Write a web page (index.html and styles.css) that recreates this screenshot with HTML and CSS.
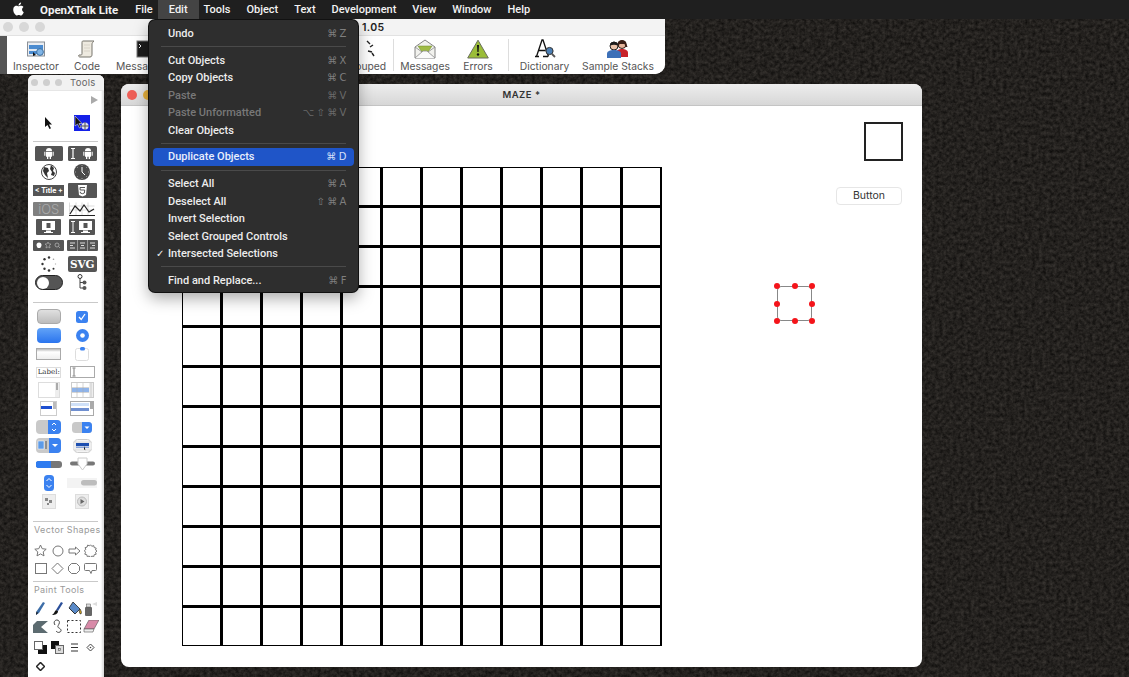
FILE: index.html

```html
<!DOCTYPE html>
<html lang="en">
<head>
  <meta charset="UTF-8" />
  <title>OpenXTalk Lite - MAZE</title>
  <link rel="stylesheet" href="styles.css">
</head>
<body>
  <svg class="wallpaper" width="1129" height="677" aria-hidden="true">
    <filter id="grain" color-interpolation-filters="sRGB" x="0" y="0" width="100%" height="100%">
      <feTurbulence type="fractalNoise" baseFrequency="0.28" numOctaves="4" seed="11"/>
      <feColorMatrix type="matrix" values="0.2 0 0 0 0.04  0.19 0 0 0 0.035  0.18 0 0 0 0.03  0 0 0 0 1"/>
    </filter>
    <rect width="1129" height="677" filter="url(#grain)"/>
  </svg>

  <nav class="menubar">
    <svg class="apple" viewBox="0 0 24 24" width="13" height="14"><path fill="#fff" d="M12.152 6.896c-.948 0-2.415-1.078-3.96-1.04-2.04.027-3.91 1.183-4.961 3.014-2.117 3.675-.546 9.103 1.519 12.09 1.013 1.454 2.208 3.09 3.792 3.039 1.52-.065 2.09-.987 3.935-.987 1.831 0 2.35.987 3.96.948 1.637-.026 2.676-1.48 3.676-2.948 1.156-1.688 1.636-3.325 1.662-3.415-.039-.013-3.182-1.221-3.22-4.857-.026-3.04 2.48-4.494 2.597-4.559-1.429-2.09-3.623-2.324-4.39-2.376-2-.156-3.675 1.09-4.61 1.09zM15.53 3.83c.843-1.012 1.4-2.427 1.245-3.83-1.207.052-2.662.805-3.532 1.818-.78.896-1.454 2.338-1.273 3.714 1.338.104 2.715-.688 3.559-1.701"/></svg>
    <span class="menu-title app-name">OpenXTalk Lite</span>
    <span class="menu-title">File</span>
    <span class="menu-title active">Edit</span>
    <span class="menu-title">Tools</span>
    <span class="menu-title">Object</span>
    <span class="menu-title">Text</span>
    <span class="menu-title">Development</span>
    <span class="menu-title">View</span>
    <span class="menu-title">Window</span>
    <span class="menu-title">Help</span>
  </nav>

  <!-- main toolbar window -->
  <section class="toolbar-win">
    <div class="toolbar-title">
      <i class="light"></i><i class="light"></i><i class="light"></i>
      <span class="version">1.05</span>
    </div>
    <div class="toolbar-body">
      <div class="tb-item tb-inspector">
        <svg width="20" height="20" viewBox="0 0 20 20">
          <rect x="1.5" y="3" width="17" height="14" fill="#e9edf2" stroke="#8a8f96"/>
          <rect x="3" y="6" width="14" height="9" fill="#4a8bd0"/>
          <rect x="3" y="10" width="14" height="2" fill="#dfe8f2"/>
          <circle cx="14" cy="13" r="3.4" fill="#7fb4e6" stroke="#3d6f9f"/>
          <path d="M7 13l3 3-3 1z" fill="#111"/>
        </svg>
        <span>Inspector</span>
      </div>
      <div class="tb-item tb-code">
        <svg width="20" height="20" viewBox="0 0 20 20">
          <path d="M6 2h11c-1 1-2 2-2 3v10c0 1 0 3-2 3H3c-1 0-2-1-1-2h2c1 0 1-1 1-2V4c0-1 0-2 1-2z" fill="#eeeae0" stroke="#77746c"/>
          <path d="M7 6h6M7 9h6M7 12h6" stroke="#cfcabd" stroke-width=".7"/>
        </svg>
        <span>Code</span>
      </div>
      <div class="tb-item tb-message">
        <svg width="20" height="20" viewBox="0 0 20 20">
          <rect x="1" y="2" width="18" height="16" fill="#1c1c1c" stroke="#777"/>
          <path d="M3 5l2 2-2 2" stroke="#eee" fill="none"/>
        </svg>
        <span>Message Box</span>
      </div>
      <div class="tb-item tb-grouped">
        <svg width="26" height="20" viewBox="0 0 26 20">
          <path d="M15 2l3 3M18 8l3-2M16 12l4 1M20 14l2 3" stroke="#222" stroke-width="1.4"/>
        </svg>
        <span>Grouped</span>
      </div>
      <i class="tb-sep"></i>
      <div class="tb-item tb-messages">
        <svg width="22" height="20" viewBox="0 0 22 20">
          <path d="M1 8L11 1l10 7v11H1z" fill="#f2f2ee" stroke="#777" stroke-width=".9"/>
          <path d="M4 7h14l-4 6H8z" fill="#9fbb45" stroke="#6d8a2a" stroke-width=".5"/>
          <path d="M1 19l8-7h4l8 7M1 8l7 5M21 8l-7 5" fill="#fafafa" stroke="#8a8a8a" stroke-width=".8"/>
        </svg>
        <span>Messages</span>
      </div>
      <div class="tb-item tb-errors">
        <svg width="22" height="20" viewBox="0 0 22 20">
          <path d="M11 1.2L21.3 19H.7z" fill="#9bbd38" stroke="#6b6f5c" stroke-linejoin="round"/>
          <path d="M10 6h2l-.4 7h-1.2z" fill="#111"/>
          <circle cx="11" cy="15.5" r="1.2" fill="#111"/>
        </svg>
        <span>Errors</span>
      </div>
      <i class="tb-sep"></i>
      <div class="tb-item tb-dictionary">
        <svg width="24" height="20" viewBox="0 0 24 20">
          <path d="M2 17.5h4M10 17.5h5M3.5 17.5L9 1h1l5.500 16.500M5.500 11.500h7" fill="none" stroke="#111" stroke-width="1.3"/>
          <circle cx="16.500" cy="12" r="3.600" fill="#4c7fb4" stroke="#333"/>
          <path d="M19 15l3 3" stroke="#555" stroke-width="1.800"/>
        </svg>
        <span>Dictionary</span>
      </div>
      <div class="tb-item tb-stacks">
        <svg width="24" height="20" viewBox="0 0 24 20">
          <circle cx="16" cy="5.500" r="4" fill="#e5b49a" stroke="#33211a"/>
          <path d="M11.500 5c0-5 9-5 9 0l1 3h-2l-1-3h-5l-1 3h-2z" fill="#3a1f16"/>
          <path d="M10 18v-4c0-3 3-4 6-4s6 1 6 4v4z" fill="#c8232a"/>
          <circle cx="8" cy="7" r="4" fill="#eac2a8" stroke="#222"/>
          <path d="M4 6.500c0-5 8-5 8 0-3-1-5-1-8 0z" fill="#1d1d1d"/>
          <path d="M1 19v-4c0-3 3-4 7-4s7 1 7 4v4z" fill="#3d70b8"/>
        </svg>
        <span>Sample Stacks</span>
      </div>
    </div>
  </section>

  <!-- tools palette -->
  <aside class="palette">
    <div class="palette-title">
      <i class="dot"></i><i class="dot"></i><i class="dot"></i>
      <span>Tools</span>
    </div>
    <div class="palette-play"></div>
    <div class="tool-grid pointer-row">
      <svg width="12" height="14" viewBox="0 0 12 14"><path d="M2 1v10l2.500-2 2 4 1.500-.8-2-3.700H9z" fill="#111"/></svg>
      <svg class="picked" width="16" height="16" viewBox="0 0 16 16">
        <rect width="16" height="16" fill="#1420e8"/>
        <path d="M1 1v10l2.500-2 2 4 1.500-.8-2-3.700H8z" fill="#111" stroke="#fff" stroke-width=".5"/>
        <circle cx="11" cy="11" r="3.500" fill="#dfe0f0"/>
        <path d="M11 7v8M7 11h8" stroke="#555"/>
      </svg>
    </div>
    <hr class="rule">
    <div class="tool-grid">
      <svg width="28" height="15" viewBox="0 0 28 15"><rect width="28" height="15" rx="1.500" fill="#555"/><use href="#droid" x="9"/></svg>
      <svg width="29" height="15" viewBox="0 0 29 15"><rect width="29" height="15" rx="1.500" fill="#555"/><path d="M5 3v9M3 2.500h4M3 12.500h4" stroke="#fff" stroke-width="1.200"/><use href="#droid" x="15"/></svg>

      <svg width="16" height="16" viewBox="0 0 16 16"><circle cx="8" cy="8" r="7.500" fill="#fff" stroke="#444"/><path d="M3 3l4 1 1 3-2 2 1 5-3-3-2-4zM10 1l3 3-1 3 2 2-1 3-3-1 1-3-2-3z" fill="#333"/></svg>
      <svg width="16" height="16" viewBox="0 0 16 16"><circle cx="8" cy="8" r="8" fill="#4b4b4b"/><path d="M8 3v5l3 3" fill="none" stroke="#fff"/><path d="M8 1v1M8 14v1M1 8h1M14 8h1M3 3l.7.7M12.300 12.300l.7.7M13 3l-.7.7M3.700 12.300L3 13" stroke="#ccc" stroke-width=".7"/></svg>

      <div class="chip title-chip">&lt; Title +</div>
      <svg width="29" height="15" viewBox="0 0 29 15"><rect width="29" height="15" rx="1" fill="#555"/><path d="M10 2h9l-1 10-3.500 1.500L11 12z" fill="#fff"/><path d="M17 4.500h-5l.2 2.500h4.500l-.3 3-2 .7-2-.7-.1-1.200" fill="none" stroke="#555"/></svg>

      <div class="chip ios-chip">iOS</div>
      <svg width="26" height="14" viewBox="0 0 26 14"><path d="M.5 .5v13h25M.5 4h25M.5 8h25M7 .5v13M13 .5v13M19 .5v13" stroke="#bbb" stroke-width=".5" fill="none"/><path d="M1 12l5-8 5 5 4-6 5 7 5-3" fill="none" stroke="#222" stroke-width="1.200"/><path d="M0 13.500h26" stroke="#222"/></svg>

      <svg width="25" height="16" viewBox="0 0 25 16"><rect width="25" height="16" rx="1" fill="#555"/><use href="#screen" x="5"/></svg>
      <svg width="26" height="16" viewBox="0 0 26 16"><rect width="26" height="16" rx="1" fill="#555"/><path d="M4 3v10M2 2.500h4M2 13.500h4" stroke="#fff"/><use href="#screen" x="9"/></svg>

      <svg width="31" height="11" viewBox="0 0 31 11"><rect width="31" height="11" rx="1" fill="#555"/><circle cx="6" cy="5" r="2.500" fill="#fff"/><rect x="4.500" y="5" width="3" height="3" fill="#fff"/><path d="M15 2l1 2h2l-1.500 1.500.5 2.500-2-1.200-2 1.200.5-2.500L12 4h2z" fill="none" stroke="#bbb" stroke-width=".6"/><circle cx="24" cy="5" r="2" fill="none" stroke="#bbb" stroke-width=".7"/><path d="M25.500 6.500L27 8" stroke="#bbb" stroke-width=".7"/></svg>
      <svg width="31" height="11" viewBox="0 0 31 11"><rect width="31" height="11" rx="1" fill="#555"/><path d="M10.500 0v11M20.500 0v11" stroke="#ddd" stroke-width=".5"/><path d="M3 3h5M3 5.500h3M3 8h5M13 3h5M14 5.500h3M13 8h5M23 3h5M25 5.500h3M23 8h5" stroke="#eee" stroke-width=".9"/></svg>

      <svg width="16" height="16" viewBox="0 0 16 16"><g fill="#333"><circle cx="8" cy="1.500" r="1.200"/><circle cx="12.500" cy="3.300" r=".8" fill="#999"/><circle cx="14.500" cy="8" r=".7" fill="#bbb"/><circle cx="12.500" cy="12.700" r="1"/><circle cx="8" cy="14.500" r="1.300"/><circle cx="3.500" cy="12.700" r="1.200"/><circle cx="1.500" cy="8" r="1.200"/><circle cx="3.500" cy="3.300" r="1.200"/></g></svg>
      <div class="chip svg-chip">SVG</div>

      <div class="toggle"><i></i></div>
      <svg width="10" height="17" viewBox="0 0 10 17"><path d="M3 3v11h4M3 8.500h4" fill="none" stroke="#444"/><circle cx="3" cy="2.500" r="2" fill="#fff" stroke="#333"/><circle cx="7.500" cy="8.500" r="2" fill="#555"/><circle cx="7.500" cy="14" r="2" fill="#555"/></svg>
    </div>
    <hr class="rule rule-b">
    <div class="tool-grid">
      <div class="btn-grey"></div>
      <svg width="12" height="12" viewBox="0 0 12 12"><rect width="12" height="12" rx="2.500" fill="#3b82f0"/><path d="M3 6l2.200 2.500L9 3" fill="none" stroke="#fff" stroke-width="1.300"/></svg>

      <div class="btn-blue"></div>
      <svg width="13" height="13" viewBox="0 0 13 13"><circle cx="6.500" cy="6.500" r="6.500" fill="#3b82f0"/><circle cx="6.500" cy="6.500" r="2.300" fill="#fff"/></svg>

      <div class="field-box"></div>
      <svg width="14" height="14" viewBox="0 0 14 14"><rect x=".5" y="1.500" width="13" height="12" rx="2" fill="#fff" stroke="#ddd"/><rect x="5" y="0" width="5" height="3.500" rx="1.500" fill="#3b82f0"/></svg>

      <div class="label-box">Label:</div>
      <svg width="25" height="12" viewBox="0 0 25 12"><rect x=".5" y=".5" width="24" height="11" fill="#fff" stroke="#aaa"/><path d="M4 2.500v7M2.500 2h3M2.500 10h3" stroke="#444" stroke-width=".7"/></svg>

      <svg width="22" height="16" viewBox="0 0 22 16"><rect x=".5" y=".5" width="21" height="15" fill="#fff" stroke="#ddd"/><rect x="17" y="1" width="4" height="14" fill="#eee"/><rect x="18" y="1" width="2" height="7" fill="#aaa"/></svg>
      <svg width="23" height="16" viewBox="0 0 23 16"><rect x=".5" y=".5" width="22" height="15" fill="#fff" stroke="#ccc"/><rect x="1" y="6" width="17" height="4" fill="#8fb4ea"/><path d="M6 1v14M12 1v14M1 5.500h17M1 10.500h17" stroke="#aaa" stroke-width=".5"/><rect x="18.500" y="1" width="3" height="14" fill="#ddd"/></svg>

      <svg width="17" height="15" viewBox="0 0 17 15"><rect x=".5" y=".5" width="16" height="14" fill="#fff" stroke="#ccc"/><rect x="1" y="5" width="11" height="3" fill="#1e4fd0"/><rect x="13" y="1" width="3" height="7" fill="#bbb"/></svg>
      <svg width="24" height="15" viewBox="0 0 24 15"><rect x=".5" y=".5" width="23" height="14" fill="#fff" stroke="#aaa"/><rect x="1" y="2" width="18" height="3" fill="#cfe0f8"/><rect x="1" y="7" width="18" height="3" fill="#6f8fd0"/><rect x="20" y="1" width="3" height="7" fill="#aaa"/></svg>

      <svg width="25" height="14" viewBox="0 0 25 14"><rect width="25" height="14" rx="4" fill="#c9c9c9"/><path d="M12 0h9a4 4 0 014 4v6a4 4 0 01-4 4h-9z" fill="#3b82f0"/><path d="M16 5l2-2 2 2M16 9l2 2 2-2" fill="none" stroke="#fff"/></svg>
      <svg width="20" height="11" viewBox="0 0 20 11"><rect width="20" height="11" rx="3.500" fill="#c9c9c9"/><path d="M10 0h6.500a3.500 3.500 0 013.500 3.500v4a3.500 3.500 0 01-3.500 3.500H10z" fill="#3b82f0"/><path d="M12.500 4.500h5l-2.500 2.500z" fill="#fff"/></svg>

      <svg width="25" height="15" viewBox="0 0 25 15"><rect width="25" height="15" rx="4" fill="#c9c9c9"/><path d="M13 0h8a4 4 0 014 4v7a4 4 0 01-4 4h-8z" fill="#3b82f0"/><path d="M16 6h6l-3 3z" fill="#fff"/><rect x="2" y="3" width="6" height="8" fill="#5d9be8" stroke="#fff" stroke-width=".5"/><path d="M10 3v8" stroke="#555"/></svg>
      <svg width="19" height="14" viewBox="0 0 19 14"><rect x="1.500" y=".5" width="16" height="13" rx="3" fill="#f4f4f4" stroke="#ccc"/><rect x="0" y="3" width="19" height="8" fill="#eee" stroke="#ccc" stroke-width=".5"/><rect x="3" y="4" width="13" height="3" fill="#1e4fb0"/><rect x="3" y="7.500" width="13" height="1.500" fill="#8aa4d8"/><path d="M11 7v4l1-.8.800 1.500" fill="#111"/></svg>

      <svg width="26" height="7" viewBox="0 0 26 7"><rect width="26" height="7" rx="3" fill="#777"/><path d="M3 0h12v7H3a3 3 0 010-7z" fill="#2f7cf0"/></svg>
      <svg width="25" height="14" viewBox="0 0 25 14"><rect y="4.500" width="25" height="4" rx="2" fill="#777"/><path d="M8 1h9v6l-4.500 6L8 7z" fill="#fff" stroke="#ccc"/></svg>

      <svg width="10" height="16" viewBox="0 0 10 16"><rect width="10" height="16" rx="3.500" fill="#3b82f0"/><path d="M2.500 6L5 3.500 7.500 6M2.500 10L5 12.500 7.500 10" fill="none" stroke="#fff"/></svg>
      <svg width="30" height="10" viewBox="0 0 30 10"><rect width="30" height="10" fill="#f3f3f3"/><rect x="14" y="2" width="16" height="5.500" rx="2.700" fill="#bdbdbd"/></svg>

      <svg width="14" height="15" viewBox="0 0 14 15"><rect x=".5" y=".5" width="13" height="14" fill="#eee" stroke="#ddd"/><path d="M3 4h3v3H3zM7 6h3v3H7zM5 9h2v2H5z" fill="#888"/></svg>
      <svg width="14" height="15" viewBox="0 0 14 15"><rect x=".5" y=".5" width="13" height="14" fill="#eee" stroke="#ddd"/><circle cx="7" cy="7.500" r="4.500" fill="#ddd" stroke="#bbb"/><path d="M5.500 5l4 2.500-4 2.500z" fill="#666"/></svg>
    </div>

    <hr class="rule rule-c">
    <p class="palette-head">Vector Shapes</p>
    <div class="tool-grid four shapes">
      <svg width="13" height="13" viewBox="0 0 13 13"><path d="M6.500 1l1.700 3.700 4 .5-3 2.700.8 4-3.500-2-3.500 2 .8-4-3-2.700 4-.5z"/></svg>
      <svg width="12" height="12" viewBox="0 0 12 12"><circle cx="6" cy="6" r="5"/></svg>
      <svg width="13" height="10" viewBox="0 0 13 10"><path d="M1 3h6.500V1L12 5 7.500 9V7H1z"/></svg>
      <svg width="13" height="13" viewBox="0 0 13 13"><path d="M6.500 .8l1.300 1.500 1.900-.7.500 2 2 .5-.7 1.900 1.500 1-1.500 1.300.7 1.900-2 .5-.5 2-1.900-.7-1.300 1.500-1.300-1.500-1.900.7-.5-2-2-.5.7-1.900L.3 6.500l1.500-1-.7-1.900 2-.5.500-2 1.900.7z"/></svg>

      <svg width="12" height="11" viewBox="0 0 12 11"><rect x=".5" y=".5" width="11" height="10"/></svg>
      <svg width="13" height="13" viewBox="0 0 13 13"><path d="M6.500 1l5.500 5.500-5.500 5.500L1 6.500z"/></svg>
      <svg width="12" height="11" viewBox="0 0 12 11"><path d="M3.500 .5h5l3 3v4l-3 3h-5l-3-3v-4z"/></svg>
      <svg width="13" height="11" viewBox="0 0 13 11"><path d="M1.500 .5h10a1 1 0 011 1v5a1 1 0 01-1 1H8l-1 3-1.500-3h-4a1 1 0 01-1-1v-5a1 1 0 011-1z"/></svg>
    </div>

    <hr class="rule rule-d">
    <p class="palette-head">Paint Tools</p>
    <div class="tool-grid four paint">
      <svg width="11" height="15" viewBox="0 0 11 15"><path d="M8 1l2 1-6 10-3 2 .5-3.500z" fill="#3d6ea8"/><path d="M1 14l.5-3.500L3 12z" fill="#111"/></svg>
      <svg width="12" height="15" viewBox="0 0 12 15"><path d="M9 1l2 1-5 8-2-1z" fill="#2a4f9a"/><path d="M4 9l2 1c0 3-3 4-6 4 2-1 2-3 4-5z" fill="#111"/></svg>
      <svg width="15" height="15" viewBox="0 0 15 15"><path d="M6 1l7 7-5 5-6-6z" fill="#5a8ac8" stroke="#222" stroke-width=".8"/><path d="M13 8c1 2 2 3 1 5-2 0-2-3-1-5zM2 7l6 6" fill="#d0a020" stroke="#222" stroke-width=".6"/></svg>
      <svg width="13" height="15" viewBox="0 0 13 15"><rect x="1" y="6" width="7" height="9" rx="1" fill="#666"/><rect x="2.500" y="3" width="4" height="3" fill="#ddd" stroke="#555" stroke-width=".5"/><path d="M8 3l5-2v4z" fill="#ddd"/></svg>

      <svg width="15" height="12" viewBox="0 0 15 12"><path d="M4 0h11L8 6l7 6H0V4z" fill="#5c6b70"/></svg>
      <svg width="11" height="15" viewBox="0 0 11 15"><path d="M3 6C1 3 3 1 5 1s3 2 2 4-2 3 0 4 3 3 1 4-3 0-4-1" fill="none" stroke="#444"/></svg>
      <svg width="14" height="13" viewBox="0 0 14 13"><rect x=".5" y=".5" width="13" height="12" fill="none" stroke="#333" stroke-dasharray="2 2"/></svg>
      <svg width="16" height="13" viewBox="0 0 16 13"><path d="M6 0h10l-5 9H1z" fill="#d88aa8" stroke="#555" stroke-width=".6"/><path d="M1 9h10l-1 3H1z" fill="#eee" stroke="#555" stroke-width=".6"/></svg>

      <svg class="low" width="13" height="13" viewBox="0 0 13 13"><rect x="4" y="4" width="9" height="9" fill="#111"/><rect x=".5" y=".5" width="8" height="8" fill="#fff" stroke="#666"/></svg>
      <svg class="low" width="13" height="13" viewBox="0 0 13 13"><rect width="8" height="8" fill="#111"/><rect x="4.500" y="4.500" width="8" height="8" fill="#ddd" stroke="#666"/><rect x="7.500" y="7.500" width="2" height="2" fill="none" stroke="#555" stroke-width=".6"/></svg>
      <svg class="low" width="9" height="9" viewBox="0 0 9 9"><path d="M1 1h7M1 4.500h7M1 8h7" stroke="#333" stroke-width="1.100"/></svg>
      <svg class="low" width="9" height="9" viewBox="0 0 9 9"><path d="M4.500 1L8 4.500 4.500 8 1 4.500z" fill="#fff" stroke="#444"/><circle cx="4.500" cy="4.500" r=".8" fill="#444"/></svg>

      <svg class="last" width="9" height="9" viewBox="0 0 9 9"><path d="M4.500 .5L8.500 4.500 4.500 8.500 .5 4.500z" fill="#fff" stroke="#222" stroke-width="1.500"/></svg>
    </div>
  </aside>

  <!-- the stack being edited -->
  <main class="stack-win">
    <div class="stack-title">
      <i class="light red"></i><i class="light yellow"></i>
      <span>MAZE *</span>
    </div>
    <div class="stack-card">
      <div class="maze" id="maze"></div>
      <div class="square"></div>
      <div class="card-button">Button</div>
      <div class="picked-shape">
        <i class="h h1"></i><i class="h h2"></i><i class="h h3"></i><i class="h h4"></i>
        <i class="h h5"></i><i class="h h6"></i><i class="h h7"></i><i class="h h8"></i>
      </div>
    </div>
  </main>

  <!-- open Edit menu -->
  <div class="menu">
    <div class="menu-item"><span>Undo</span><kbd>⌘ Z</kbd></div>
    <hr>
    <div class="menu-item"><span>Cut Objects</span><kbd>⌘ X</kbd></div>
    <div class="menu-item"><span>Copy Objects</span><kbd>⌘ C</kbd></div>
    <div class="menu-item off"><span>Paste</span><kbd>⌘ V</kbd></div>
    <div class="menu-item off"><span>Paste Unformatted</span><kbd>⌥ ⇧ ⌘ V</kbd></div>
    <div class="menu-item"><span>Clear Objects</span></div>
    <hr>
    <div class="menu-item current"><span>Duplicate Objects</span><kbd>⌘ D</kbd></div>
    <hr>
    <div class="menu-item"><span>Select All</span><kbd>⌘ A</kbd></div>
    <div class="menu-item"><span>Deselect All</span><kbd>⇧ ⌘ A</kbd></div>
    <div class="menu-item"><span>Invert Selection</span></div>
    <div class="menu-item"><span>Select Grouped Controls</span></div>
    <div class="menu-item checked"><span>Intersected Selections</span></div>
    <hr>
    <div class="menu-item"><span>Find and Replace...</span><kbd>⌘ F</kbd></div>
  </div>

  <svg width="0" height="0" class="defs" aria-hidden="true">
    <symbol id="droid" width="10" height="15" viewBox="0 0 10 15">
      <path d="M2 5a3 3 0 016 0zM2 5.700h6v5H2zM.3 5.700h1.100v4H.3zM8.600 5.700h1.100v4H8.600zM3 10h1.300v3H3zM5.700 10H7v3H5.700z" fill="#fff"/>
    </symbol>
    <symbol id="screen" width="15" height="16" viewBox="0 0 15 16">
      <rect x="1" y="2" width="13" height="9" fill="#fff"/>
      <rect x="5.500" y="4" width="4" height="5" fill="#555"/>
      <path d="M5 11.500h5v1.500h2v1H3v-1h2z" fill="#fff"/>
    </symbol>
  </svg>

  <script src="script.js"></script>
</body>
</html>
```

FILE: styles.css

```css
* {
  box-sizing: border-box;
}
html, body {
  margin: 0;
  height: 677px;
  overflow: hidden;
}
body {
  position: relative;
  width: 1129px;
  background: #25231f;
  font-family: Inter, "Liberation Sans", sans-serif;
  color: #222;
}
.wallpaper {
  position: absolute;
  left: 0;
  top: 0;
}
.defs {
  position: absolute;
}
.menubar {
  position: relative;
  z-index: 5;
  display: flex;
  align-items: center;
  gap: 16px;
  height: 19px;
  padding-left: 40px;
  background: #1f1f1f;
  font-family: Roboto, "Liberation Sans", sans-serif;
}
.apple {
  position: absolute;
  left: 12px;
  top: 2px;
}
.menu-title {
  position: relative;
  color: #f2f2f2;
  font-size: 11px;
  font-weight: 500;
}
.app-name {
  margin-right: 1px;
  font-size: 11.5px;
  font-weight: 700;
}
.menu-title.active {
  background: #444;
  margin: 0 -11px;
  padding: 0 11px;
  line-height: 19px;
}
.light {
  display: block;
  width: 10px;
  height: 10px;
  border-radius: 50%;
  background: #d8d8d8;
}

/* toolbar window */
.toolbar-win {
  position: absolute;
  left: 0;
  top: 19px;
  width: 665px;
  height: 55px;
  border-radius: 0 0 10px 0;
  overflow: hidden;
  background: #fff;
}
.toolbar-title {
  display: flex;
  align-items: center;
  gap: 6px;
  height: 17px;
  padding-left: 3px;
  background: #f3f3f3;
  border-bottom: 1px solid #e2e2e2;
}
.version {
  margin-left: 311px;
  font-size: 10.5px;
  font-weight: 600;
  letter-spacing: .4px;
  color: #222;
}
.toolbar-body {
  display: flex;
  height: 38px;
  border-left: 7px solid #555;
  background: #fff;
}
.tb-item {
  display: flex;
  flex-direction: column;
  align-items: center;
  padding-top: 3px;
  flex: none;
}
.tb-item span {
  margin-top: 1px;
  font-size: 10.3px;
  line-height: 12px;
  color: #555;
  white-space: nowrap;
}
.tb-inspector { width: 58px; }
.tb-code { width: 44px; }
.tb-message { width: 74px; }
.tb-grouped { width: 44px; margin-left: 160px; }
.tb-messages { width: 62px; }
.tb-errors { width: 44px; }
.tb-dictionary { width: 71px; }
.tb-stacks { width: 76px; }
/* the open menu covers the rest of this label */
.tb-message span {
  align-self: flex-start;
  width: 32px;
  margin-left: 7px;
  overflow: hidden;
}
.tb-sep {
  flex: none;
  width: 1px;
  height: 32px;
  margin: 3px 6px 0;
  background: #ddd;
}
.tb-grouped + .tb-sep {
  margin: 3px 0 0 6px;
}
.tb-errors + .tb-sep {
  margin: 3px 0 0 8px;
}

/* tools palette */
.palette {
  position: absolute;
  left: 28px;
  top: 75px;
  width: 76px;
  height: 620px;
  border-radius: 6px 6px 0 0;
  overflow: hidden;
  background: #fff;
  box-shadow: inset -2px 0 2px #ddd;
}
.palette-title {
  display: flex;
  align-items: center;
  gap: 5px;
  height: 16px;
  padding-left: 3px;
  background: #f2f2f2;
  border-bottom: 1px solid #e6e6e6;
}
.palette-title span {
  margin-left: 3px;
  font-size: 9.5px;
  color: #666;
  letter-spacing: .3px;
}
.dot {
  display: block;
  width: 7px;
  height: 7px;
  border-radius: 50%;
  background: #cfcfcf;
}
.palette-play {
  width: 0;
  height: 0;
  margin: 5px 0 0 63px;
  border-left: 7px solid #aaa;
  border-top: 4.5px solid transparent;
  border-bottom: 4.5px solid transparent;
}
.tool-grid {
  display: grid;
  grid-template-columns: 33.5px 33.5px;
  grid-auto-rows: 18.45px;
  justify-items: center;
  align-items: center;
  margin-left: 4px;
}
.tool-grid svg {
  display: block;
}
.pointer-row {
  margin-top: 11px;
  grid-auto-rows: 16px;
}
.rule {
  height: 1px;
  margin: 10px 6px 2.5px 5px;
  border: 0;
  background: #c9c9c9;
}
.rule-b {
  margin-top: 10px;
  margin-bottom: 4.5px;
}
.rule-c {
  margin-top: 11px;
  margin-bottom: 0;
}
.rule-d {
  margin-top: 3px;
  margin-bottom: 0;
}
.palette-head {
  margin: 2px 0 5px 6px;
  font-size: 9px;
  line-height: 12px;
  letter-spacing: .35px;
  color: #999;
}
.four {
  grid-template-columns: repeat(4, 16.7px);
  margin-left: 4.5px;
}
.paint {
  margin-top: -2px;
}
.shapes svg {
  fill: #fff;
  stroke: #777;
}
.low {
  position: relative;
  top: 2px;
}
.last {
  grid-column: 1;
  position: relative;
  top: 3px;
}
.chip {
  display: flex;
  align-items: center;
  justify-content: center;
  background: #555;
  color: #fff;
}
.title-chip {
  width: 31px;
  height: 11px;
  font-size: 7px;
  font-weight: 700;
  white-space: nowrap;
}
.ios-chip {
  width: 31px;
  height: 14px;
  border-radius: 1px;
  background: #808080;
  color: #aaa;
  font-size: 13px;
  font-weight: 300;
}
.svg-chip {
  width: 29px;
  height: 16px;
  border-radius: 2px;
  font-family: "DejaVu Serif", serif;
  font-size: 10.5px;
  font-weight: 700;
}
.toggle {
  display: flex;
  align-items: center;
  width: 28px;
  height: 15px;
  padding-left: 1px;
  border: 1.5px solid #222;
  border-radius: 8px;
  background: #555;
}
.toggle i {
  display: block;
  width: 12px;
  height: 12px;
  border-radius: 50%;
  background: #fff;
}
.btn-grey, .btn-blue {
  width: 24px;
  height: 15px;
  border-radius: 4px;
}
.btn-grey {
  border: 1px solid #aaa;
  background: linear-gradient(#e0e0e0, #bcbcbc);
}
.btn-blue {
  background: linear-gradient(#62a3f7, #2a74ee);
}
.field-box {
  width: 25px;
  height: 12px;
  border: 1px solid #aaa;
  background: linear-gradient(#bbb, #fff 30%, #eee);
}
.label-box {
  width: 25px;
  height: 11px;
  border: 1px solid #ddd;
  font-family: "DejaVu Serif", serif;
  font-size: 7px;
  line-height: 9px;
  text-align: center;
  color: #333;
}

/* stack window */
.stack-win {
  position: absolute;
  left: 121px;
  top: 84px;
  width: 801px;
  height: 583px;
  border-radius: 8px;
  overflow: hidden;
  background: #fff;
  display: flex;
  flex-direction: column;
}
.stack-title {
  position: relative;
  display: flex;
  align-items: center;
  justify-content: center;
  flex: none;
  height: 22px;
  background: linear-gradient(#ededed, #d7d7d7);
  border-bottom: 1px solid #c4c4c4;
}
.stack-title span {
  font-size: 9.5px;
  font-weight: 600;
  letter-spacing: .5px;
  color: #333;
}
.red, .yellow {
  position: absolute;
  top: 6px;
}
.red {
  left: 6px;
  background: #ee5f57;
}
.yellow {
  left: 22px;
  background: #e5b03c;
}
.stack-card {
  position: relative;
  flex: 1;
}
.maze {
  position: absolute;
  left: 61px;
  top: 61px;
  display: grid;
  grid-template-columns: repeat(12, 37px);
  grid-auto-rows: 37px;
  gap: 3px;
  padding: 1px 2px 1px 1px;
  background: #000;
}
.maze i {
  display: block;
  background: #fff;
}
.square {
  position: absolute;
  left: 743px;
  top: 16px;
  width: 39px;
  height: 39px;
  border: 2px solid #222;
}
.card-button {
  position: absolute;
  left: 715px;
  top: 81px;
  width: 66px;
  height: 18px;
  border: 1px solid #e6e6e6;
  border-radius: 4px;
  font-size: 10.5px;
  line-height: 16px;
  text-align: center;
  color: #333;
}
.picked-shape {
  position: absolute;
  left: 656px;
  top: 180px;
  width: 35px;
  height: 35px;
  border: 1px solid #888;
  border-radius: 4px;
}
.h {
  position: absolute;
  width: 6px;
  height: 6px;
  border-radius: 50%;
  background: #f4141a;
}
.h1 { left: -4px; top: -4px; }
.h2 { left: 14px; top: -4px; }
.h3 { right: -4px; top: -4px; }
.h4 { left: -4px; top: 14px; }
.h5 { right: -4px; top: 14px; }
.h6 { left: -4px; bottom: -4px; }
.h7 { left: 14px; bottom: -4px; }
.h8 { right: -4px; bottom: -4px; }

/* Edit menu */
.menu {
  position: absolute;
  z-index: 4;
  left: 149px;
  top: 20px;
  width: 209px;
  height: 272px;
  padding: 4.5px 4px 4px;
  border-radius: 6px;
  background: #2e2e2e;
  box-shadow: 0 0 0 1px #111, 0 6px 16px rgba(0,0,0,.35);
  font-family: Roboto, "Liberation Sans", sans-serif;
}
.menu hr {
  height: 1px;
  margin: 4.125px 8px;
  border: 0;
  background: #4a4a4a;
}
.menu-item {
  display: flex;
  align-items: center;
  justify-content: space-between;
  position: relative;
  height: 17.5px;
  padding: 0 8px 0 15px;
  border-radius: 4px;
  font-size: 11px;
  font-weight: 500;
  color: #ececec;
  white-space: nowrap;
}
.menu-item kbd {
  font-family: "DejaVu Sans", sans-serif;
  font-size: 10px;
  letter-spacing: -.4px;
  color: #7f7f7f;
}
.off {
  color: #787878;
}
.off kbd {
  color: #6a6a6a;
}
.current {
  background: #1f55c8;
  color: #e8eefc;
}
.current kbd {
  color: #d6e0f8;
}
.checked::before {
  content: "✓";
  position: absolute;
  left: 3px;
  font-family: "DejaVu Sans", sans-serif;
  font-size: 10px;
  color: #eee;
}
```

FILE: script.js

```js
const maze = document.getElementById('maze');
for (let i = 0; i < 144; i++) {
  maze.appendChild(document.createElement('i'));
}
```
